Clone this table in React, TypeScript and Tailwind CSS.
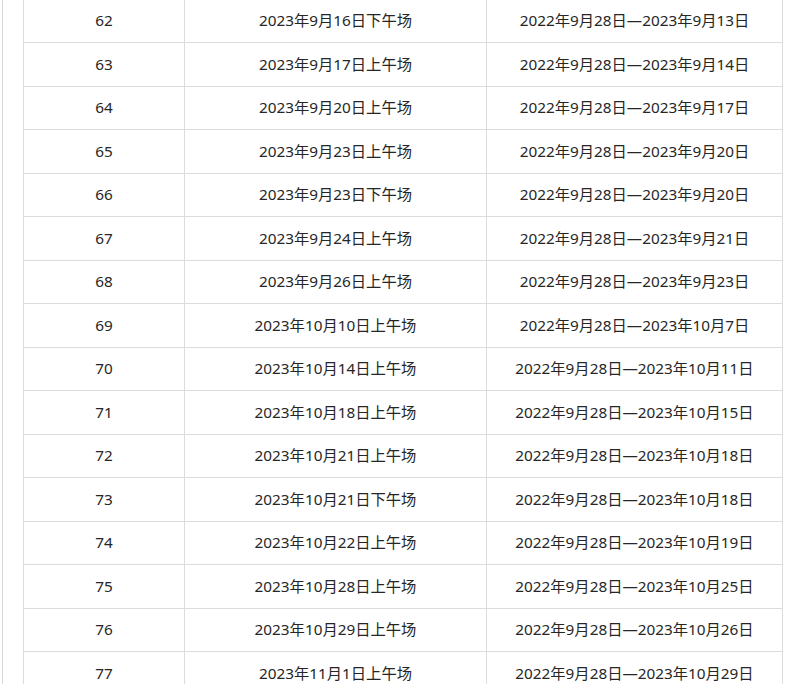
const rows: [number, string, string][] = [
  [62, '2023年9月16日下午场', '2022年9月28日—2023年9月13日'],
  [63, '2023年9月17日上午场', '2022年9月28日—2023年9月14日'],
  [64, '2023年9月20日上午场', '2022年9月28日—2023年9月17日'],
  [65, '2023年9月23日上午场', '2022年9月28日—2023年9月20日'],
  [66, '2023年9月23日下午场', '2022年9月28日—2023年9月20日'],
  [67, '2023年9月24日上午场', '2022年9月28日—2023年9月21日'],
  [68, '2023年9月26日上午场', '2022年9月28日—2023年9月23日'],
  [69, '2023年10月10日上午场', '2022年9月28日—2023年10月7日'],
  [70, '2023年10月14日上午场', '2022年9月28日—2023年10月11日'],
  [71, '2023年10月18日上午场', '2022年9月28日—2023年10月15日'],
  [72, '2023年10月21日上午场', '2022年9月28日—2023年10月18日'],
  [73, '2023年10月21日下午场', '2022年9月28日—2023年10月18日'],
  [74, '2023年10月22日上午场', '2022年9月28日—2023年10月19日'],
  [75, '2023年10月28日上午场', '2022年9月28日—2023年10月25日'],
  [76, '2023年10月29日上午场', '2022年9月28日—2023年10月26日'],
  [77, '2023年11月1日上午场', '2022年9月28日—2023年10月29日'],
];

export default function App() {
  return (
    <div
      className="h-[684px] w-[798px] overflow-hidden bg-white text-[15.3px] text-[#262626]"
      style={{ fontFamily: '"Noto Sans", "Noto Sans CJK SC", sans-serif' }}
    >
      <div className="ml-[2px] flex h-full border-l border-[#d9d9d9]">
        <div className="ml-[20px] mt-[-0.5px] w-[760px] border-x border-[#dcdcdc]">
          {rows.map(([no, session, range]) => (
            <div
              key={no}
              className="flex h-[43.5px] items-center border-b border-[#dcdcdc]"
            >
              <div className="flex h-full w-[161px] items-center justify-center border-r border-[#dcdcdc]">
                {no}
              </div>
              <div className="flex h-full w-[302px] items-center justify-center border-r border-[#dcdcdc]">
                {session}
              </div>
              <div className="flex h-full flex-1 items-center justify-center">
                {range}
              </div>
            </div>
          ))}
        </div>
      </div>
    </div>
  );
}
